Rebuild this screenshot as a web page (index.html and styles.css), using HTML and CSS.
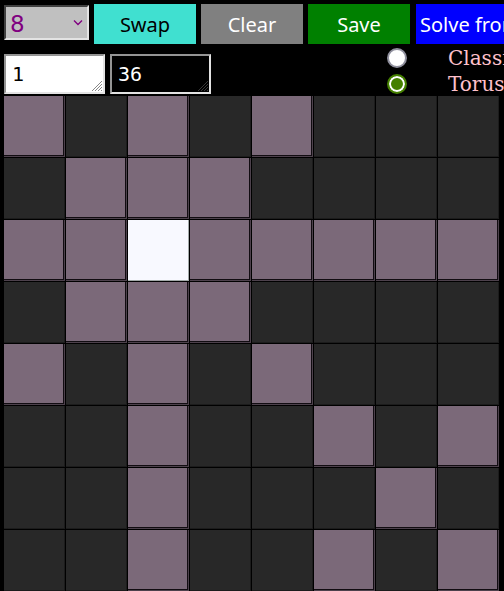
FILE: index.html
```html
<!DOCTYPE html>
<html lang="en">
<head>
<meta charset="utf-8">
<title>Board</title>
<link rel="stylesheet" href="styles.css">
</head>
<body>
<header class="toolbar">
  <div class="picker">
    <select class="size" aria-label="Board size"><option>8</option></select>
    <svg class="chevron" viewBox="0 0 10 8" aria-hidden="true"><path d="M1 1.5 5 5.5 9 1.5"/></svg>
  </div>
  <button class="btn swap">Swap</button>
  <button class="btn clear">Clear</button>
  <button class="btn save">Save</button>
  <button class="btn solve">Solve from</button>
</header>
<section class="options">
  <div class="field">
    <textarea class="light" aria-label="From" rows="1">1</textarea>
    <svg class="grip" viewBox="0 0 12 12" aria-hidden="true"><path d="M1 11 11 1M4 11 11 4M7 11 11 7M10 11 11 10"/></svg>
  </div>
  <div class="field">
    <textarea class="dark" aria-label="To" rows="1">36</textarea>
    <svg class="grip dim" viewBox="0 0 12 12" aria-hidden="true"><path d="M1 11 11 1M4 11 11 4M7 11 11 7M10 11 11 10"/></svg>
  </div>
  <div class="modes">
    <label class="mode"><input type="radio" name="mode"><span>Classic</span></label>
    <label class="mode"><input type="radio" name="mode" checked><span>Torus</span></label>
  </div>
</section>
<main class="board" id="board"></main>
<script src="board.js"></script>
</body>
</html>
```
FILE: styles.css
```css
* { box-sizing: border-box; }
body {
  margin: 0;
  padding: 4px 4px 0;
  background: #000;
  overflow: hidden;
  font-family: "Noto Sans", sans-serif;
}
.toolbar {
  display: flex;
  align-items: flex-start;
  gap: 5px;
  height: 40px;
}
.picker {
  position: relative;
  flex: 0 0 85px;
  margin-top: 1px;
}
.size {
  display: block;
  appearance: none;
  width: 100%;
  height: 35px;
  padding: 2px 4px 0;
  border: 2px inset;
  border-color: #949494 #e3e3e3 #e3e3e3 #949494;
  border-radius: 0;
  background: #c0c0c0;
  color: #800080;
  font: 23px "DejaVu Sans", sans-serif;
}
.chevron {
  position: absolute;
  right: 6px;
  top: 14px;
  width: 10px;
  height: 8px;
  fill: none;
  stroke: #800080;
  stroke-width: 1.4;
  pointer-events: none;
}
.btn {
  flex: 0 0 102px;
  height: 40px;
  padding: 0 4px;
  border: 0;
  color: #fff;
  font: 20px "Noto Sans", sans-serif;
  white-space: nowrap;
}
.swap { background: #40e0d0; color: #000; }
.clear { background: #808080; }
.save { background: #008000; }
.solve { flex-basis: 112px; background: #00f; text-align: left; margin-left: 1px; }
.options {
  display: flex;
  gap: 5px;
  height: 52px;
  align-items: flex-start;
}
.field {
  position: relative;
  flex: 0 0 101px;
  margin-top: 10px;
}
.field textarea {
  display: block;
  width: 100%;
  height: 40px;
  padding: 4px 6px;
  border: 2px solid;
  border-color: #949494 #e3e3e3 #e3e3e3 #949494;
  resize: none;
  overflow: hidden;
  font: 20px/28px "DejaVu Sans Mono", monospace;
}
.light { background: #fff; color: #000; }
.dark { background: #000; color: #fff; }
.grip {
  position: absolute;
  right: 2px;
  bottom: 2px;
  width: 12px;
  height: 12px;
  stroke: #888;
  pointer-events: none;
}
.dim { stroke: #383838; }
.modes {
  flex: 1;
  padding-left: 171px;
}
.mode {
  display: flex;
  align-items: center;
  gap: 41px;
  height: 26px;
  padding-top: 1px;
  color: #ffc0cb;
  font: 20px "DejaVu Serif", serif;
  white-space: nowrap;
}
.mode input {
  appearance: none;
  flex: none;
  width: 20px;
  height: 20px;
  margin: 0;
  border: 2px solid #8f8f9d;
  border-radius: 50%;
  background: #fff;
}
.mode input:checked {
  border-color: #458000;
  background: #458000;
  box-shadow: inset 0 0 0 2px #fff;
}
.board {
  display: grid;
  grid-template-columns: repeat(8, 1fr);
}
.cell {
  aspect-ratio: 1;
  border: 0 solid #000;
  border-width: 0 1px 1px 0;
  background: #282828;
}
.cell.off { box-shadow: inset -1px -1px #1c1c1c; }
.cell.hit {
  background: #7b6979;
  box-shadow: inset -1px -1px #4d414c, inset -2px -2px #120d12;
}
.cell.queen {
  background: #f8f9ff;
  box-shadow: inset -1px -1px #a3aaa9;
}
```
FILE: board.js
```js
// Q = queen, x = attacked square, . = free square
const rows = [
  "x.x.x...",
  ".xxx....",
  "xxQxxxxx",
  ".xxx....",
  "x.x.x...",
  "..x..x.x",
  "..x...x.",
  "..x..x.x"
];
const kinds = { Q: "queen", x: "hit", ".": "off" };
const board = document.getElementById("board");
for (const row of rows) {
  for (const mark of row) {
    const cell = document.createElement("div");
    cell.className = "cell " + kinds[mark];
    board.append(cell);
  }
}
```
